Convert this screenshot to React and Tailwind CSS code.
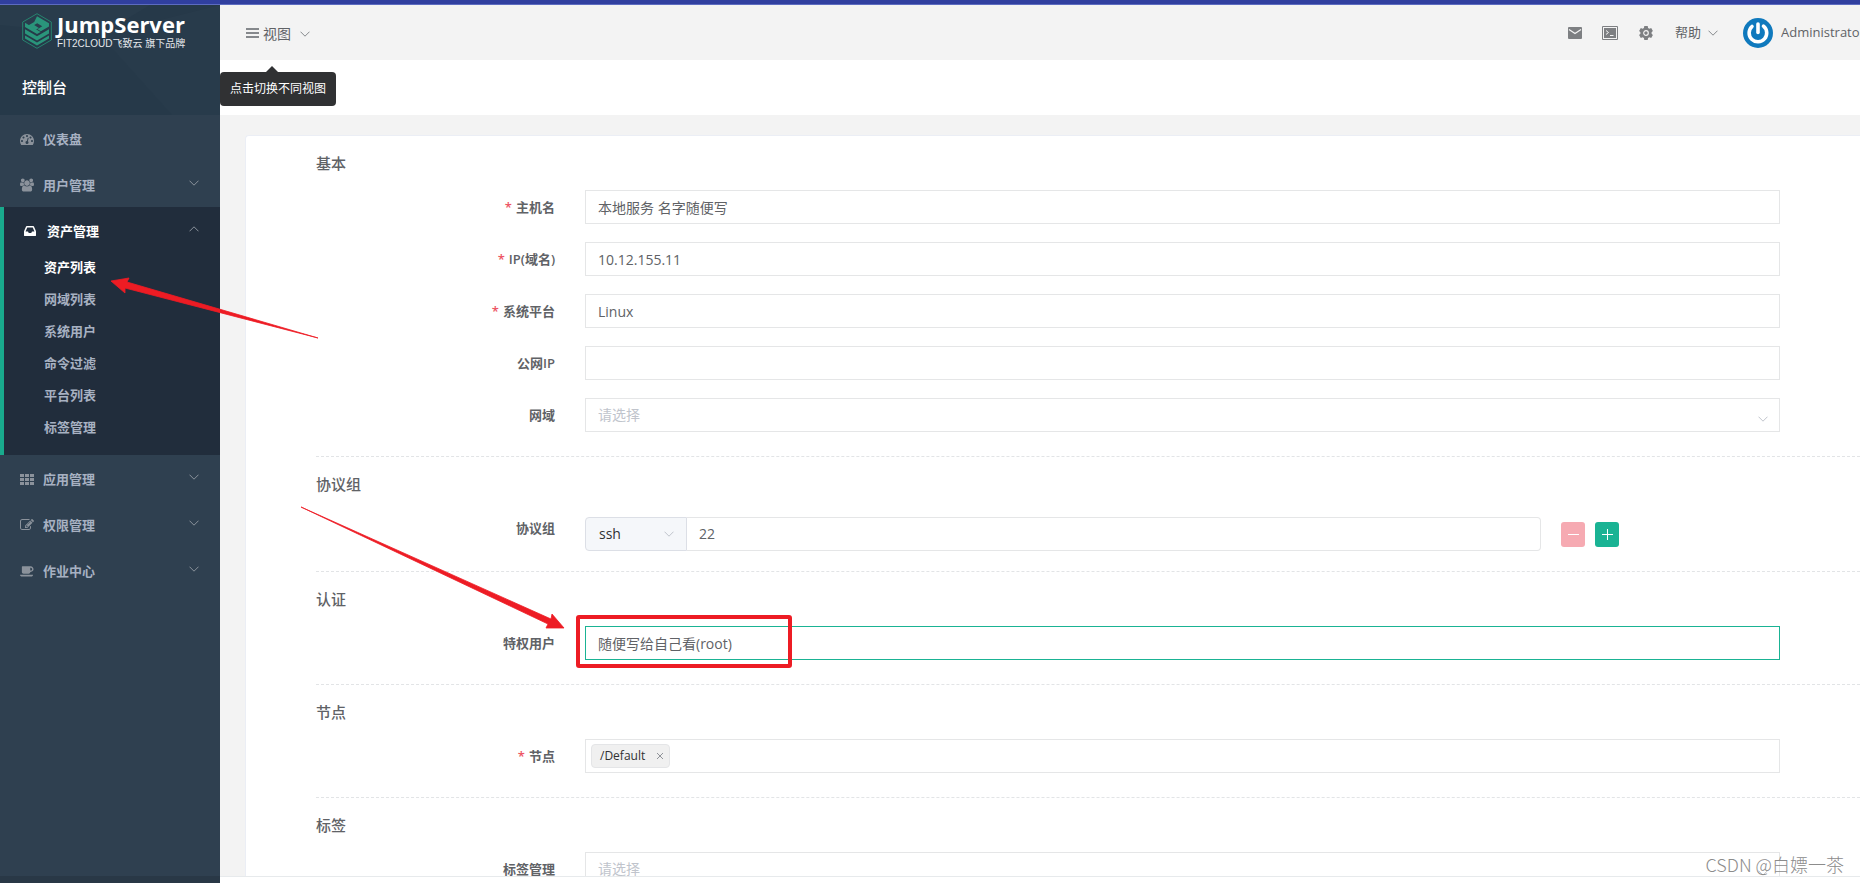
import { useState } from 'react'

// Font Awesome 4 glyphs used by the side menu
const GLYPHS = {
  dashboard: {
    box: '0 0 1792 1792',
    d: 'M384 1152q0-53-37.5-90.5t-90.5-37.5-90.5 37.5-37.5 90.5 37.5 90.5 90.5 37.5 90.5-37.5 37.5-90.5zm192-448q0-53-37.5-90.5t-90.5-37.5-90.5 37.5-37.5 90.5 37.5 90.5 90.5 37.5 90.5-37.5 37.5-90.5zm428 481l101-382q6-26-7.5-48.5t-38.5-29.5-48 6.5-30 39.5l-101 382q-60 5-107 43.5t-63 98.5q-20 77 20 146t117 89 146-20 89-117q16-60-6-117t-72-91zm660-33q0-53-37.5-90.5t-90.5-37.5-90.5 37.5-37.5 90.5 37.5 90.5 90.5 37.5 90.5-37.5 37.5-90.5zm-640-640q0-53-37.5-90.5t-90.5-37.5-90.5 37.5-37.5 90.5 37.5 90.5 90.5 37.5 90.5-37.5 37.5-90.5zm448 192q0-53-37.5-90.5t-90.5-37.5-90.5 37.5-37.5 90.5 37.5 90.5 90.5 37.5 90.5-37.5 37.5-90.5zm320 448q0 261-141 483-19 29-54 29h-1402q-35 0-54-29-141-221-141-483 0-182 71-348t191-286 286-191 348-71 348 71 286 191 191 286 71 348z',
  },
  users: {
    box: '0 0 1920 1792',
    d: 'M593 896q-162 5-265 128h-134q-82 0-138-40.5t-56-118.5q0-353 124-353 6 0 43.5 21t97.5 42.5 119 21.5q67 0 133-23-5 37-5 66 0 139 81 256zm1071 637q0 120-73 189.5t-194 69.5h-874q-121 0-194-69.5t-73-189.5q0-53 3.5-103.5t14-109 26.5-108.5 43-97.5 62-81 85.5-53.5 111.5-20q10 0 43 21.5t73 48 107 48 135 21.5 135-21.5 107-48 73-48 43-21.5q61 0 111.5 20t85.5 53.5 62 81 43 97.5 26.5 108.5 14 109 3.5 103.5zm-1024-1277q0 106-75 181t-181 75-181-75-75-181 75-181 181-75 181 75 75 181zm704 384q0 159-112.5 271.5t-271.5 112.5-271.5-112.5-112.5-271.5 112.5-271.5 271.5-112.5 271.5 112.5 112.5 271.5zm576 225q0 78-56 118.5t-138 40.5h-134q-103-123-265-128 81-117 81-256 0-29-5-66 66 23 133 23 59 0 119-21.5t97.5-42.5 43.5-21q124 0 124 353zm-128-609q0 106-75 181t-181 75-181-75-75-181 75-181 181-75 181 75 75 181z',
  },
  inbox: {
    box: '0 0 1792 1792',
    d: 'M1151 960h316q-1-3-2.5-8t-2.5-8l-212-496h-708l-212 496q-1 2-2.5 8t-2.5 8h316l95 192h320zm513 30v482q0 26-19 45t-45 19h-1408q-26 0-45-19t-19-45v-482q0-62 25-123l238-552q10-25 36.5-42t52.5-17h832q26 0 52.5 17t36.5 42l238 552q25 61 25 123z',
  },
  th: {
    box: '0 0 14 14',
    d: 'M0 2h4v3H0zM5 2h4v3H5zM10 2h4v3h-4zM0 6h4v3H0zM5 6h4v3H5zM10 6h4v3h-4zM0 10h4v3H0zM5 10h4v3H5zM10 10h4v3h-4z',
  },
  edit: {
    box: '0 0 1792 1792',
    d: 'M888 1184l116-116-152-152-116 116v56h96v96h56zm440-720q-16-16-33 1l-350 350q-17 17-1 33t33-1l350-350q17-17 1-33zm80 594v190q0 119-84.5 203.5t-203.5 84.5h-832q-119 0-203.5-84.5t-84.5-203.5v-832q0-119 84.5-203.5t203.5-84.5h832q63 0 117 25 15 7 18 23 3 17-9 29l-49 49q-14 14-32 8-23-6-45-6h-832q-66 0-113 47t-47 113v832q0 66 47 113t113 47h832q66 0 113-47t47-113v-126q0-13 9-22l64-64q15-15 35-7t20 29zm-96-738l288 288-672 672h-288v-288zm444 132l-92 92-288-288 92-92q28-28 68-28t68 28l152 152q28 28 28 68t-28 68z',
  },
  coffee: {
    box: '0 0 1920 1792',
    d: 'M1664 640q0-80-56-136t-136-56h-64v384h64q80 0 136-56t56-136zm-1664 768h1792q0 106-75 181t-181 75h-1280q-106 0-181-75t-75-181zm1856-768q0 159-112.5 271.5t-271.5 112.5h-64v32q0 92-66 158t-158 66h-704q-92 0-158-66t-66-158v-736q0-26 19-45t45-19h1152q159 0 271.5 112.5t112.5 271.5z',
  },
}

const SUB_ITEMS = ['资产列表', '网域列表', '系统用户', '命令过滤', '平台列表', '标签管理']

function Glyph({ name }) {
  const glyph = GLYPHS[name]
  return (
    <svg viewBox={glyph.box} className="h-[14px] w-[14px] shrink-0" fill="currentColor" aria-hidden="true">
      <path d={glyph.d} />
    </svg>
  )
}

function Chevron({ up = false, className = '' }) {
  return (
    <svg viewBox="0 0 10 6" className={`h-[6px] w-[10px] shrink-0 ${className}`} fill="none" stroke="currentColor" aria-hidden="true">
      <path d={up ? 'M.5 5.3 5 .8l4.500 4.500' : 'M.5.7 5 5.200 9.500.7'} />
    </svg>
  )
}

function Logo() {
  return (
    <a href="#" className="relative flex items-center gap-[5px] pt-[6px] pl-[22px] text-white">
      <svg viewBox="0 0 30 36" className="h-9 w-[30px] shrink-0" aria-hidden="true">
        <path d="M15 .7 29.300 9v18L15 35.300.7 27V9z" fill="none" stroke="#27846f" strokeWidth="1" />
        <g fill="#2a957b">
          <path d="M15 3.200 27 10.200v3.200l-8.200 4.800-3.300-2 4.700-2.900-5-3-3 1.800 4.600 2.800-3.100 1.900-7.500-4.400 6-3.500z" />
          <path d="M3 9.800l2.500 1.500 13.200 7.600L15 21 3 14z" />
          <path d="M3 16.200l12 7 12-7v4.200l-12 7-12-7z" />
          <path d="M3 22.400l12 7 12-7v3.200l-12 7-12-7z" />
        </g>
      </svg>
      <span className="flex flex-col whitespace-nowrap">
        <span className="text-[22px] leading-[26px] font-bold">JumpServer</span>
        <span className="font-['Liberation_Sans','Noto_Sans_CJK_SC',sans-serif] text-[10px] leading-[14px] text-gray-200">
          FIT2CLOUD飞致云 旗下品牌
        </span>
      </span>
    </a>
  )
}

function MenuItem({ icon, label, expandable = true }) {
  return (
    <button type="button" className="flex h-[46px] w-full items-center pt-[2px] pr-[21px] pl-5 text-left text-[#8b929b]">
      <Glyph name={icon} />
      <span className="flex-1 pl-[9px] text-[13px] leading-5 font-semibold text-[#a7b1c2]">{label}</span>
      {expandable && <Chevron className="mb-1" />}
    </button>
  )
}

function Sidebar() {
  return (
    <aside className="flex w-[220px] shrink-0 flex-col bg-[#2f4050]">
      <div className="relative h-[110px] overflow-hidden bg-[#263949]">
        <svg viewBox="0 0 220 110" className="absolute inset-0 h-full w-full" aria-hidden="true">
          <path d="M0 0h150L100 30 0 20z" fill="#293c4c" />
          <path d="M100 30 220 0v110h-48z" fill="#283b4b" />
        </svg>
        <Logo />
        <div className="relative pt-6 pl-[22px] text-[15px] leading-6 font-medium text-white">控制台</div>
      </div>
      <nav className="flex-1">
        <MenuItem icon="dashboard" label="仪表盘" expandable={false} />
        <MenuItem icon="users" label="用户管理" />
        <div className="border-l-4 border-[#19aa8d] bg-[#212d3c] pb-3">
          <button type="button" className="flex h-11 w-full items-center pt-1 pr-[21px] pl-[19px] text-left text-white">
            <Glyph name="inbox" />
            <span className="flex-1 pl-[10px] text-[13px] leading-5 font-semibold">资产管理</span>
            <Chevron up className="mb-1 text-[#8b929b]" />
          </button>
          {SUB_ITEMS.map((item, i) => (
            <a
              key={item}
              href="#"
              className={`block h-8 pl-10 text-[13px] leading-8 font-semibold ${i === 0 ? 'text-white' : 'text-[#a7b1c2]'}`}
            >
              {item}
            </a>
          ))}
        </div>
        <MenuItem icon="th" label="应用管理" />
        <MenuItem icon="edit" label="权限管理" />
        <MenuItem icon="coffee" label="作业中心" />
      </nav>
      <div className="h-[7px] bg-[#293846]" />
    </aside>
  )
}

function Header() {
  return (
    <header className="flex h-[55px] shrink-0 items-center bg-[#f3f3f3] text-[#606266]">
      <div className="relative ml-[26px] pt-[2px]">
        <button type="button" className="flex items-center text-sm leading-6">
          <svg viewBox="0 0 13 11" className="mr-1 h-[11px] w-[13px] text-[#85888c]" fill="currentColor" aria-hidden="true">
            <path d="M0 0h13v2H0zM0 4h13v2H0zM0 8h13v2H0z" />
          </svg>
          视图
          <Chevron className="ml-[9px] text-[#85888c]" />
        </button>
        <div
          role="tooltip"
          className="absolute top-[52px] -left-[26px] rounded bg-[#303133] px-[10px] py-2 text-xs leading-[18px] whitespace-nowrap text-white"
        >
          <svg viewBox="0 0 12 6" className="absolute -top-[6px] left-[46px] h-[6px] w-3" aria-hidden="true">
            <path d="M0 6 6 0l6 6z" fill="#303133" />
          </svg>
          点击切换不同视图
        </div>
      </div>
      <div className="ml-auto flex items-center text-[13px]">
        <button type="button" aria-label="站内信" className="mr-5 text-[#7d7f82]">
          <svg viewBox="0 0 14 12" className="h-3 w-[14px]">
            <rect width="14" height="12" rx="1" fill="currentColor" />
            <path d="m1 2.500 6 4 6-4" fill="none" stroke="#f3f3f3" strokeWidth="1.300" />
          </svg>
        </button>
        <button type="button" aria-label="Web终端" className="mr-[21px] text-[#7d7f82]">
          <svg viewBox="0 0 16 14" className="h-[14px] w-4" fill="none">
            <path d="M.5.5h15v13H.5z" stroke="currentColor" />
            <path d="M2 2h12v10H2z" fill="currentColor" />
            <path d="m4 4.500 2.500 2L4 8.500M8 9.500h3.500" stroke="#f3f3f3" />
          </svg>
        </button>
        <button type="button" aria-label="设置" className="mr-[22px] text-[#7d7f82]">
          <svg viewBox="0 0 14 14" className="h-[14px] w-[14px]">
            <path
              fill="currentColor"
              d="M5.300 0h3.400l.4 1.900 1.300.8 1.800-.6 1.700 2.900-1.300 1.200v1.600l1.300 1.200-1.700 2.900-1.800-.6-1.300.8-.4 1.900H5.300l-.4-1.900-1.300-.8-1.800.6L.1 9l1.300-1.200V6.200L.1 5l1.700-2.900 1.800.6 1.300-.8z"
            />
            <circle cx="7" cy="7" r="2.300" fill="none" stroke="#f3f3f3" strokeWidth="1.200" />
          </svg>
        </button>
        <button type="button" className="flex items-center">
          帮助
          <Chevron className="ml-[7px] text-[#85888c]" />
        </button>
        <button type="button" className="ml-[25px] flex items-center gap-2">
          <svg viewBox="0 0 30 30" className="h-[30px] w-[30px]" fill="none" aria-hidden="true">
            <circle cx="15" cy="15" r="15" fill="#0f79bd" />
            <path d="M9 8.500A8.800 8.800 0 1 0 20.500 8.200" stroke="#fff" strokeWidth="3.600" strokeLinecap="round" />
            <path d="M15 6v8.500" stroke="#fff" strokeWidth="3.600" strokeLinecap="round" />
          </svg>
          <span className="w-[79px] overflow-hidden pt-px whitespace-nowrap">Administrator</span>
        </button>
      </div>
    </header>
  )
}

function Section({ title, last = false, compact = false, children }) {
  return (
    <section className={last ? '' : compact ? 'border-b border-dashed border-[#e2e4e6] pb-5' : 'border-b border-dashed border-[#e2e4e6] pb-6'}>
      <h3 className="py-[15px] text-[15px] leading-6 font-medium text-[#606266]">{title}</h3>
      <div className="flex flex-col gap-[18px] pr-20">{children}</div>
    </section>
  )
}

function Row({ id, label, required = false, children }) {
  return (
    <div className="flex">
      <label htmlFor={id} className="w-1/5 max-w-[239px] shrink-0 text-right text-[13px] leading-[34px] font-semibold text-[#606266]">
        {required && <span className="mr-1 text-[#ed5565]">*</span>}
        {label}
      </label>
      <div className="ml-[30px] min-w-0 flex-1">{children}</div>
    </div>
  )
}

function TextBox({ id, value, onChange, focused = false }) {
  return (
    <input
      id={id}
      type="text"
      value={value}
      onChange={(e) => onChange(e.target.value)}
      className={`block h-[34px] w-full border bg-white px-3 text-sm text-[#606266] outline-none ${focused ? 'border-[#1ab394]' : 'border-[#e5e6e7]'}`}
    />
  )
}

function EmptySelect({ id }) {
  return (
    <div className="relative">
      <select id={id} defaultValue="" className="block h-[34px] w-full appearance-none border border-[#e5e6e7] bg-white px-3 text-sm text-[#c0c4cc] outline-none">
        <option value="">请选择</option>
      </select>
      <Chevron className="pointer-events-none absolute top-[18px] right-3 text-[#c0c4cc]" />
    </div>
  )
}

function AssetForm() {
  const [form, setForm] = useState({
    hostname: '本地服务 名字随便写',
    ip: '10.12.155.11',
    platform: 'Linux',
    publicIp: '',
    port: '22',
    adminUser: '随便写给自己看(root)',
  })
  const set = (key) => (value) => setForm({ ...form, [key]: value })

  return (
    <form className="rounded-tl border-t border-l border-[#ebeef5] bg-white pl-[70px]">
      <Section title="基本">
        <Row id="hostname" label="主机名" required>
          <TextBox id="hostname" value={form.hostname} onChange={set('hostname')} />
        </Row>
        <Row id="ip" label="IP(域名)" required>
          <TextBox id="ip" value={form.ip} onChange={set('ip')} />
        </Row>
        <Row id="platform" label="系统平台" required>
          <TextBox id="platform" value={form.platform} onChange={set('platform')} />
        </Row>
        <Row id="publicIp" label="公网IP">
          <TextBox id="publicIp" value={form.publicIp} onChange={set('publicIp')} />
        </Row>
        <Row id="domain" label="网域">
          <EmptySelect id="domain" />
        </Row>
      </Section>

      <Section title="协议组" compact>
        <Row id="port" label="协议组">
          <div className="flex items-center pt-[6px]">
            <div className="flex h-[34px] w-4/5">
              <div className="relative w-[102px] shrink-0">
                <select aria-label="协议" className="h-full w-full appearance-none rounded-l border border-[#dcdfe6] bg-[#f5f7fa] px-[13px] text-sm text-[#303133] outline-none">
                  <option>ssh</option>
                </select>
                <Chevron className="pointer-events-none absolute top-[14px] right-[13px] text-[#c0c4cc]" />
              </div>
              <input
                id="port"
                type="text"
                value={form.port}
                onChange={(e) => set('port')(e.target.value)}
                className="min-w-0 flex-1 rounded-r-sm border border-l-0 border-[#e5e6e7] px-3 text-sm text-[#606266] outline-none"
              />
            </div>
            <button type="button" disabled aria-label="删除" className="ml-5 flex h-[25px] w-6 items-center justify-center rounded-[3px] bg-[#f6aab2] text-white">
              <svg viewBox="0 0 11 11" className="h-[11px] w-[11px]" stroke="currentColor">
                <path d="M0 5.500h11" />
              </svg>
            </button>
            <button type="button" aria-label="添加" className="ml-[10px] flex h-[25px] w-6 items-center justify-center rounded-[3px] bg-[#1ab394] text-white">
              <svg viewBox="0 0 11 11" className="h-[11px] w-[11px]" stroke="currentColor">
                <path d="M0 5.500h11M5.500 0v11" />
              </svg>
            </button>
          </div>
        </Row>
      </Section>

      <Section title="认证">
        <Row id="adminUser" label="特权用户">
          <TextBox id="adminUser" value={form.adminUser} onChange={set('adminUser')} focused />
        </Row>
      </Section>

      <Section title="节点">
        <Row id="nodes" label="节点" required>
          <div className="flex h-[34px] items-center border border-[#e5e6e7] pl-[5px]">
            <span className="flex h-6 items-center rounded border border-[#e4e5e7] bg-[#f0f0f0] pr-[5px] pl-2 text-xs text-[#303133]">
              /Default
              <button type="button" aria-label="移除 /Default" className="ml-[11px] text-[#909399]">
                <svg viewBox="0 0 8 8" className="h-2 w-2" stroke="currentColor">
                  <path d="m1 1 6 6M7 1 1 7" />
                </svg>
              </button>
            </span>
            <input id="nodes" type="text" className="h-full min-w-0 flex-1 px-2 text-sm outline-none" />
          </div>
        </Row>
      </Section>

      <Section title="标签" last>
        <Row id="labels" label="标签管理">
          <EmptySelect id="labels" />
        </Row>
      </Section>
    </form>
  )
}

// Hand-drawn marks laid over the page
function Annotations() {
  return (
    <svg className="pointer-events-none absolute top-0 left-0 h-[883px] w-[900px]" viewBox="0 0 900 883" aria-hidden="true">
      <g fill="#ed1c24" stroke="#ed1c24" strokeWidth=".8">
        <path d="M111 281l18-3-2 4 191 56-193-50 0 5z" />
        <path d="M564 628l-12-14-1 5-250-112 247 117-2 4z" />
      </g>
      <rect x="578" y="617" width="212" height="49" rx="1" fill="none" stroke="#ed1c24" strokeWidth="4" />
    </svg>
  )
}

export default function App() {
  return (
    <div className="relative flex h-screen flex-col overflow-hidden bg-[#f3f3f3] font-['Open_Sans','Noto_Sans_CJK_SC',sans-serif]">
      <div className="h-[5px] shrink-0 border-b border-[#5c6bc0] bg-[#303f9f]" />
      <div className="flex min-h-0 flex-1">
        <Sidebar />
        <div className="flex min-w-0 flex-1 flex-col">
          <Header />
          <div className="h-[55px] shrink-0 bg-white" />
          <main className="min-h-0 flex-1 overflow-hidden pt-5 pl-[25px]">
            <AssetForm />
          </main>
          <footer className="h-[7px] shrink-0 border-t border-[#e7eaec] bg-white" />
        </div>
      </div>
      <Annotations />
      <div className="absolute right-4 bottom-[6px] font-['Noto_Sans_CJK_SC',sans-serif] text-lg leading-[26px] font-light text-[#8c8c8c]">
        CSDN @白嫖一茶
      </div>
    </div>
  )
}
